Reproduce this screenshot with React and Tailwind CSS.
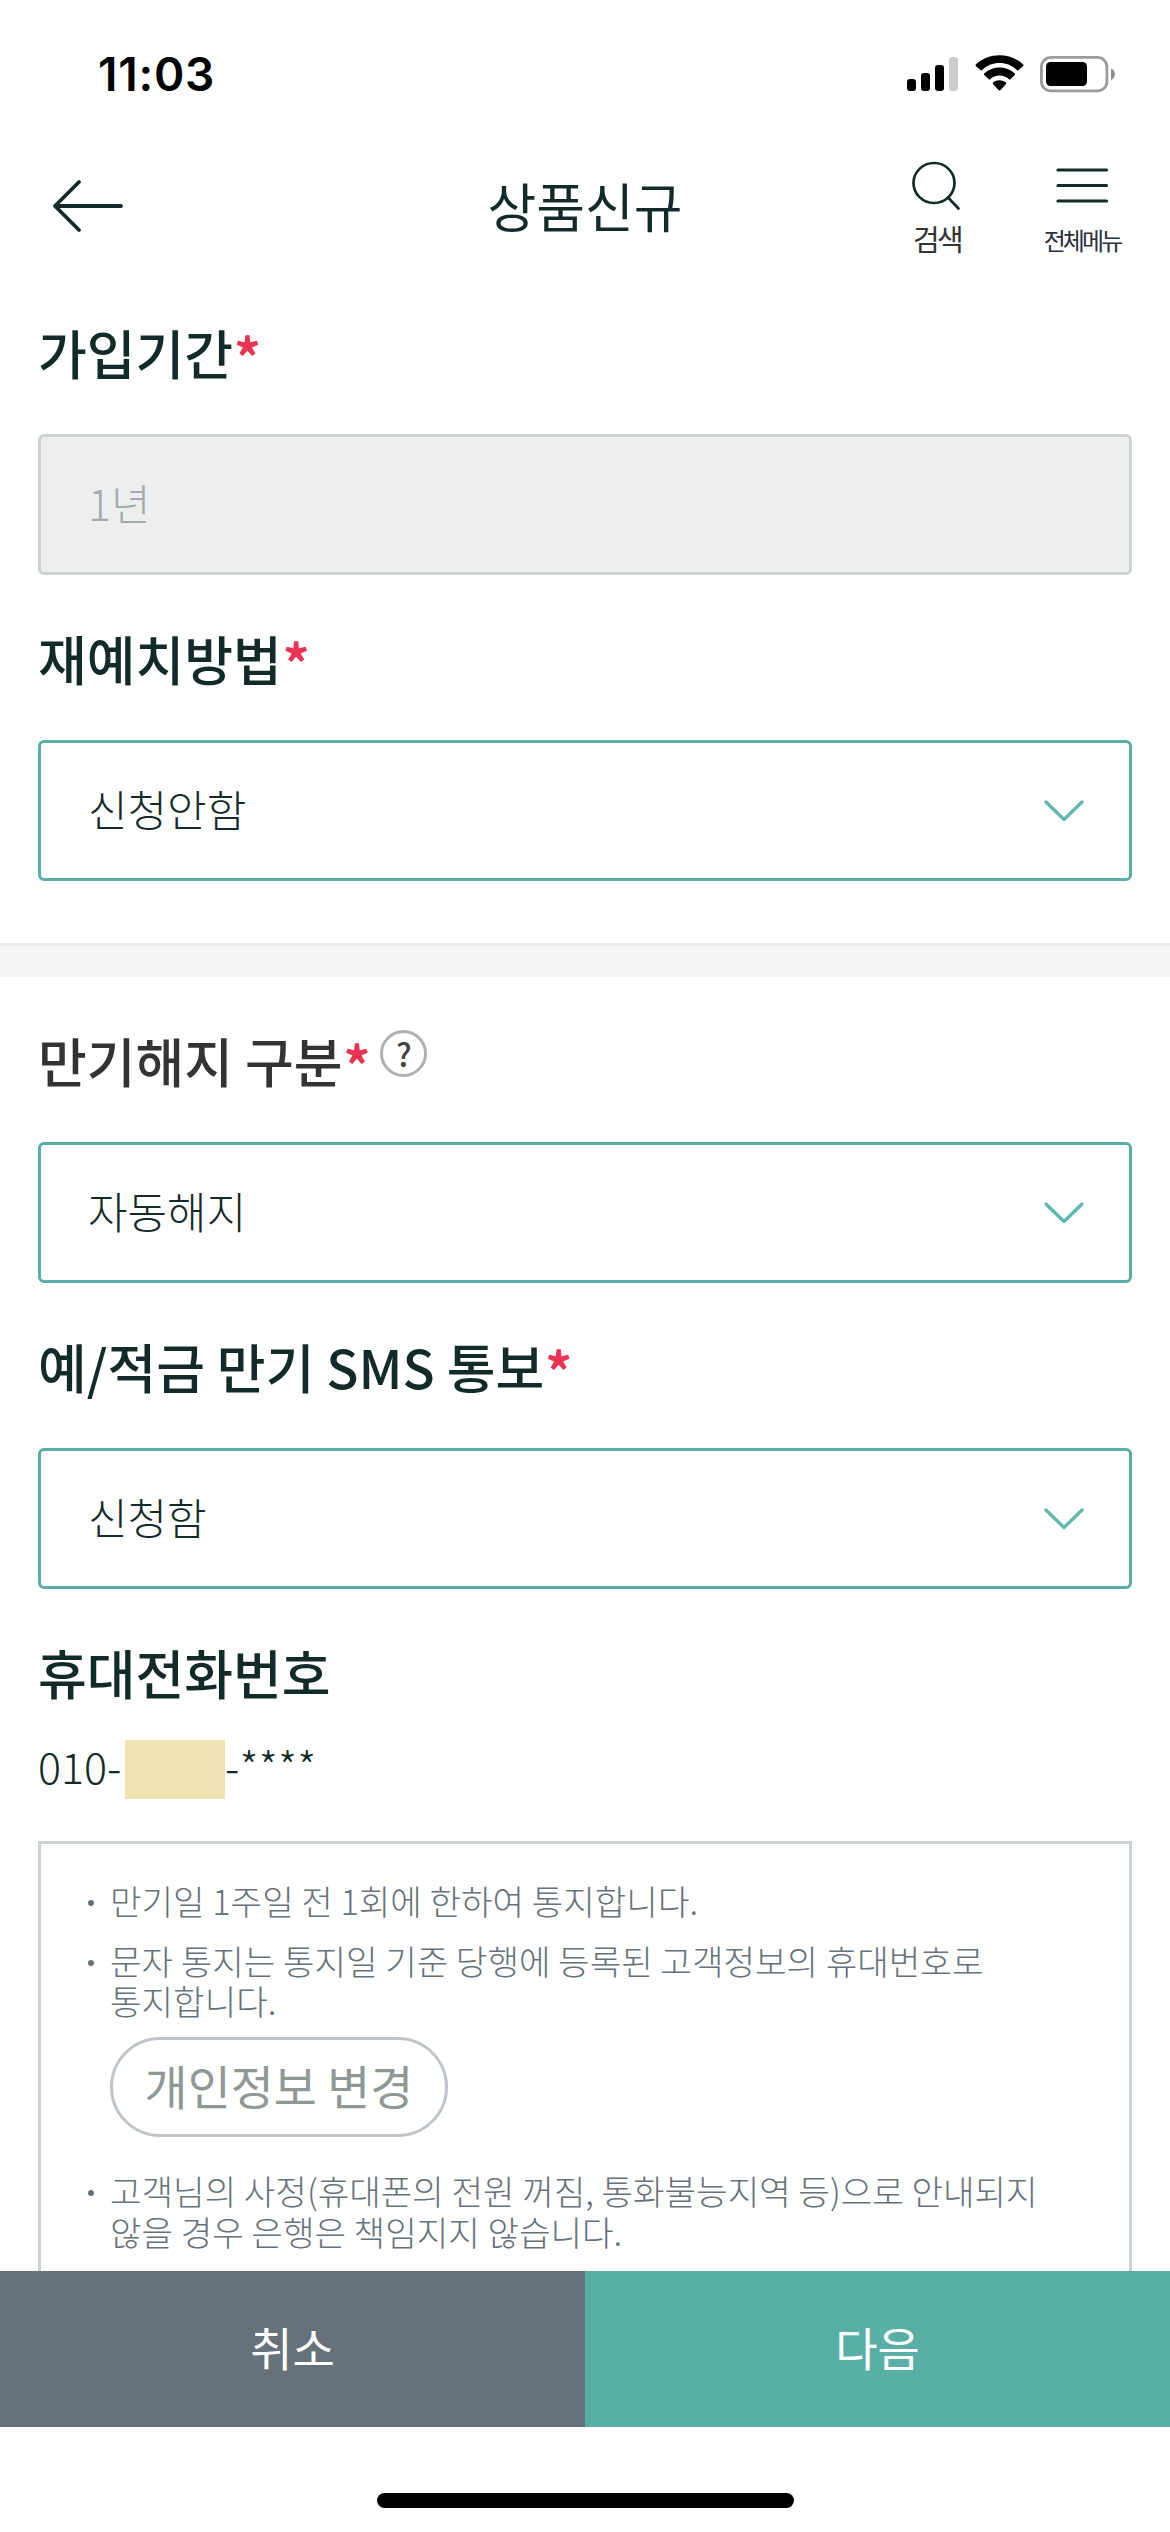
import React from "react";

const StatusBar = () => (
  <div className="flex h-[150px] items-start justify-between pl-[98px] pr-[54px] pt-[55px] text-black">
    <span className="font-['Inter',sans-serif] text-[46px] font-semibold leading-[39px] tracking-[0.8px]">11:03</span>
    <div className="flex items-start">
      {/* Signal */}
      <svg width="52" height="38" viewBox="0 0 52 38" className="mr-[16px]">
        <rect x="0" y="24" width="9" height="12" rx="3" />
        <rect x="14" y="18" width="9" height="18" rx="3" />
        <rect x="28" y="10" width="9" height="26" rx="3" />
        <rect x="42" y="2" width="9" height="34" rx="3" fill="#cccccc" />
      </svg>
      {/* Wifi */}
      <svg width="49" height="37" viewBox="0 0 49 37" className="mr-[16px]">
        <path d="M24.5 8.1c6.7 0 12.9 2.6 17.5 7.1.4.3.9.3 1.3 0l4.900-4.300c.4-.4.4-1 0-1.400C35.500-2.900 13.500-2.900.8 9.500c-.4.4-.4 1 0 1.400l4.900 4.300c.4.300.9.300 1.300 0 4.600-4.500 10.800-7.100 17.500-7.100z" />
        <path d="M24.500 20.600c3.600 0 6.900 1.300 9.400 3.600.4.400 1 .4 1.400 0l4.500-4.300c.4-.4.4-1 0-1.400-8.600-7.900-22-7.900-30.600 0-.4.4-.4 1 0 1.400l4.500 4.300c.4.400 1 .4 1.400 0 2.500-2.300 5.800-3.600 9.400-3.600z" />
        <path d="M31 28.900c.4-.4.4-1 0-1.400-3.800-3.100-9.200-3.100-13 0-.4.400-.4 1 0 1.400l5.700 6.400c.4.400 1.200.4 1.600 0z" />
      </svg>
      {/* Battery */}
      <svg width="76" height="38" viewBox="0 0 76 38">
        <rect x="1.4" y="2.4" width="65.5" height="33.5" rx="9.5" fill="none" stroke="#9b9b9b" strokeWidth="2.8" />
        <rect x="6" y="7" width="41" height="24" rx="4.5" />
        <path d="M71 13.5c5.2 2.3 5.2 9.3 0 11.6z" fill="#8c8c8c" />
      </svg>
    </div>
  </div>
);

const Header = () => (
  <header className="grid h-[143px] grid-cols-3 items-start px-[45px] text-[#122a28]">
    <button className="w-fit pl-[3px] pt-[28px]">
      <svg width="78" height="56" viewBox="0 0 78 56" fill="none" stroke="currentColor" strokeWidth="3.8" strokeLinecap="round" strokeLinejoin="round">
        <path d="M73 28H7M31 4 7 28 31 52" />
      </svg>
    </button>
    <h1 className="pt-[15px] text-center text-[53px] leading-[80px]">상품신규</h1>
    <div className="flex justify-end">
      <button className="flex w-[60px] flex-col items-center">
        <svg width="60" height="64" viewBox="0 0 60 64" fill="none" stroke="currentColor" strokeWidth="2.7" strokeLinecap="round">
          <ellipse cx="27" cy="33" rx="20.5" ry="20" />
          <path d="M41 47.500 51.500 58.500" />
        </svg>
        <span className="mt-[4px] whitespace-nowrap text-[29px] leading-[40px] tracking-[-2.6px] text-[#333333]">검색</span>
      </button>
      <button className="ml-[72px] flex w-[86px] flex-col items-center">
        <svg width="56" height="64" viewBox="0 0 56 64" stroke="currentColor" strokeWidth="3.2" strokeLinecap="round">
          <path d="M4 20H52.500M4 35.500H52.500M4 51H52.500" />
        </svg>
        <span className="mt-[6px] whitespace-nowrap text-[24px] leading-[40px] tracking-[-2.9px] text-[#2b3040]">전체메뉴</span>
      </button>
    </div>
  </header>
);

const Label = ({ children, required, help, gray }) => (
  <div className={`flex h-[80px] items-center text-[53px] font-medium leading-[80px] ${gray ? "text-[#333333]" : "text-[#122a28]"}`}>
    <span>{children}</span>
    {required && <span className="ml-px mt-[6px] font-bold text-[#eb3352]">*</span>}
    {help && (
      <span className="mb-[14px] ml-[10px] flex h-[47px] w-[47px] items-center justify-center rounded-full border-[3px] border-[#b0b0b0] text-[32px] leading-[40px] text-[#444444]">
        ?
      </span>
    )}
  </div>
);

const Field = ({ label, value, disabled, help, gray }) => (
  <div className="pb-[43px]">
    <Label required help={help} gray={gray}>{label}</Label>
    <div
      className={`mt-[42px] flex h-[141px] items-center justify-between rounded-[6px] border-[3px] pl-[47px] pr-[44px] text-[43px] font-light ${
        disabled ? "border-[#cdd3d1] bg-[#eeeeee] text-[#a0abaa]" : "border-[#59afa6] bg-white text-[#122a28]"
      }`}
    >
      <span className="pb-[5px] leading-[64px]">{value}</span>
      {!disabled && (
        <svg width="42" height="26" viewBox="0 0 42 26" fill="none" stroke="#5fb8af" strokeWidth="3.3" strokeLinecap="round" strokeLinejoin="round">
          <path d="M3 4 21 21.500 39 4" />
        </svg>
      )}
    </div>
  </div>
);

const Note = ({ children }) => (
  <li className="flex text-[34.3px] leading-[40.7px]">
    <span className="mr-[16px] mt-[20px] h-[6px] w-[6px] shrink-0 rounded-full bg-[#67717a]" />
    <div className="whitespace-nowrap">{children}</div>
  </li>
);

const App = () => {
  return (
    <div className="flex h-[2532px] w-[1170px] flex-col overflow-hidden bg-white font-['Noto_Sans_CJK_KR',sans-serif]">
      <StatusBar />
      <Header />

      <main className="min-h-0 flex-1 overflow-hidden">
        <section className="px-[38px] pt-[19px]">
          <Field label="가입기간" value="1년" disabled />
          <Field label="재예치방법" value="신청안함" />
        </section>

        <div className="mt-[19px] h-[34px] border-t-[3px] border-[#ebebeb] bg-[#f5f5f5]" />

        <section className="px-[38px] pt-[43px]">
          <Field label="만기해지 구분" value="자동해지" help gray />
          <Field label="예/적금 만기 SMS 통보" value="신청함" />

          <Label>휴대전화번호</Label>
          <div className="mt-[28px] flex h-[59px] items-start text-[43px] font-light leading-[50px] text-[#122a28]">
            <span className="w-[87px]">010-</span>
            <span className="h-[59px] w-[100px] bg-[#f0e3b0]" />
            <span className="tracking-[0.2px]">-****</span>
          </div>

          {/* Notice */}
          <div className="mt-[42px] h-[560px] border-[3px] border-[#cdd3d1] pl-[47px] pt-[36px] font-light text-[#67717a]">
            <ul>
              <Note>만기일 1주일 전 1회에 한하여 통지합니다.</Note>
              <li className="h-[19px]" />
              <Note>
                문자 통지는 통지일 기준 당행에 등록된 고객정보의 휴대번호로
                <br />
                통지합니다.
                <button className="mb-[33px] mt-[16px] flex h-[100px] w-[338px] items-center justify-center rounded-full border-[3px] border-[#c0c5ca] pb-[5px] text-[46.8px] font-normal leading-[68px] text-[#8f9895]">
                  개인정보 변경
                </button>
              </Note>
              <Note>
                고객님의 사정(휴대폰의 전원 꺼짐, 통화불능지역 등)으로 안내되지
                <br />
                않을 경우 은행은 책임지지 않습니다.
              </Note>
            </ul>
          </div>
        </section>
      </main>

      {/* Bottom actions */}
      <footer className="h-[261px] shrink-0 bg-white">
        <div className="grid h-[156px] grid-cols-2 text-[46px] text-white">
          <button className="bg-[#67717a] pb-[5px]">취소</button>
          <button className="bg-[#59afa6] pb-[5px]">다음</button>
        </div>
        <div className="mx-auto mt-[66px] h-[15px] w-[417px] rounded-full bg-black" />
      </footer>
    </div>
  );
};

export default App;
